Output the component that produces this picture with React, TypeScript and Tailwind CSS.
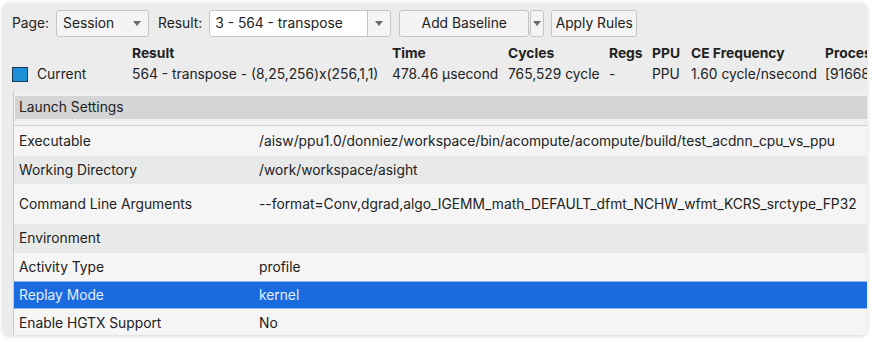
const font = { fontFamily: 'Inter, "Liberation Sans", Arial, sans-serif' };

function Caret() {
    return (
        <svg width="8" height="5" viewBox="0 0 8 5" className="shrink-0">
            <path d="M0 0h8L4 5z" fill="#6b6b6b" />
        </svg>
    );
}

const rows = [
    { label: 'Executable', value: '/aisw/ppu1.0/donniez/workspace/bin/acompute/acompute/build/test_acdnn_cpu_vs_ppu', tone: 'light', h: 'h-[30px]' },
    { label: 'Working Directory', value: '/work/workspace/asight', tone: 'dark', h: 'h-[28px]' },
    { label: 'Command Line Arguments', value: '--format=Conv,dgrad,algo_IGEMM_math_DEFAULT_dfmt_NCHW_wfmt_KCRS_srctype_FP32', tone: 'light', h: 'h-[40px]' },
    { label: 'Environment', value: '', tone: 'dark', h: 'h-[29px]' },
    { label: 'Activity Type', value: 'profile', tone: 'light', h: 'h-[28px]' },
    { label: 'Replay Mode', value: 'kernel', tone: 'selected', h: 'h-[28px]' },
    { label: 'Enable HGTX Support', value: 'No', tone: 'light', h: 'h-[28px]' },
];

export default function App() {
    return (
        <div className="w-[875px] h-[342px] bg-white pt-[3px] pl-[3px] text-[13.8px] text-[#222]" style={font}>
            <div className="w-[864px] h-[332px] bg-[#ececec] rounded-[6px] shadow-[0_1px_4px_rgba(0,0,0,0.18)] overflow-hidden flex flex-col">
                {/* Toolbar */}
                <div className="flex items-center h-[27px] mt-[7px] pl-[9px]">
                    <span className="mr-[7px]">Page:</span>
                    <div className="flex items-center justify-between w-[93px] h-[27px] pl-[6px] pr-[7px] bg-[#f4f4f4] border border-[#c4c4c4] rounded-[3px]">
                        <span>Session</span>
                        <Caret />
                    </div>
                    <span className="ml-[9px] mr-[7px]">Result:</span>
                    <div className="flex items-center w-[182px] h-[27px] bg-white border border-[#c4c4c4] rounded-[3px]">
                        <span className="flex-1 px-[5px]">3 - 564 - transpose</span>
                        <div className="flex items-center justify-center w-[23px] h-full bg-[#f4f4f4] border-l border-[#c4c4c4] rounded-r-[3px]">
                            <Caret />
                        </div>
                    </div>
                    <div className="flex items-center justify-center ml-[8px] w-[130px] h-[27px] bg-[#f4f4f4] border border-[#c4c4c4] rounded-[3px]">
                        Add Baseline
                    </div>
                    <div className="flex items-center justify-center ml-[1px] w-[14px] h-[27px] bg-[#f4f4f4] border border-[#c4c4c4] rounded-[3px]">
                        <Caret />
                    </div>
                    <div className="flex items-center justify-center ml-[7px] w-[86px] h-[27px] bg-[#f4f4f4] border border-[#c4c4c4] rounded-[3px]">
                        Apply Rules
                    </div>
                </div>

                {/* Result summary */}
                <div className="grid grid-cols-[120px_260px_116px_101px_43px_39px_134px_1fr] pl-[9px] mt-[6px] whitespace-nowrap">
                    <div />
                    <div className="font-bold leading-[20px]">Result</div>
                    <div className="font-bold leading-[20px]">Time</div>
                    <div className="font-bold leading-[20px]">Cycles</div>
                    <div className="font-bold leading-[20px]">Regs</div>
                    <div className="font-bold leading-[20px]">PPU</div>
                    <div className="font-bold leading-[20px]">CE Frequency</div>
                    <div className="font-bold leading-[20px] overflow-hidden">Proces</div>

                    <div className="flex items-center gap-[9px] leading-[22px]">
                        <span className="w-[16px] h-[15px] bg-[#1e8fd9] border border-[#1d3b55]" />
                        Current
                    </div>
                    <div className="leading-[22px]">564 - transpose - (8,25,256)x(256,1,1)</div>
                    <div className="leading-[22px]">478.46 μsecond</div>
                    <div className="leading-[22px]">765,529 cycle</div>
                    <div className="leading-[22px]">-</div>
                    <div className="leading-[22px]">PPU</div>
                    <div className="leading-[22px]">1.60 cycle/nsecond</div>
                    <div className="leading-[22px] overflow-hidden">[91668</div>
                </div>

                {/* Launch settings table */}
                <div className="flex-1 ml-[10px] mt-[6px] border-l border-[#c9c9c9] bg-[#f1f1f1] flex flex-col pt-[5px] min-h-0">
                    <div className="h-[23px] flex items-center px-[4px] ml-[1px] bg-[#d5d5d5] shrink-0">Launch Settings</div>
                    <div className="h-[7px] border-b border-[#d0d0d0] shrink-0" />
                    {rows.map((r) => (
                        <div
                            key={r.label}
                            className={`flex items-center shrink-0 ${r.h} ${
                                r.tone === 'selected'
                                    ? 'bg-[#1a6be0] text-[#e6efff] border-y border-[#8fb6ee]'
                                    : r.tone === 'dark'
                                      ? 'bg-[#e8e9e9]'
                                      : 'bg-[#f5f5f5]'
                            }`}
                        >
                            <div className="w-[245px] pl-[5px] shrink-0">{r.label}</div>
                            <div className="flex-1 whitespace-nowrap overflow-hidden">{r.value}</div>
                        </div>
                    ))}
                </div>
            </div>
        </div>
    );
}
